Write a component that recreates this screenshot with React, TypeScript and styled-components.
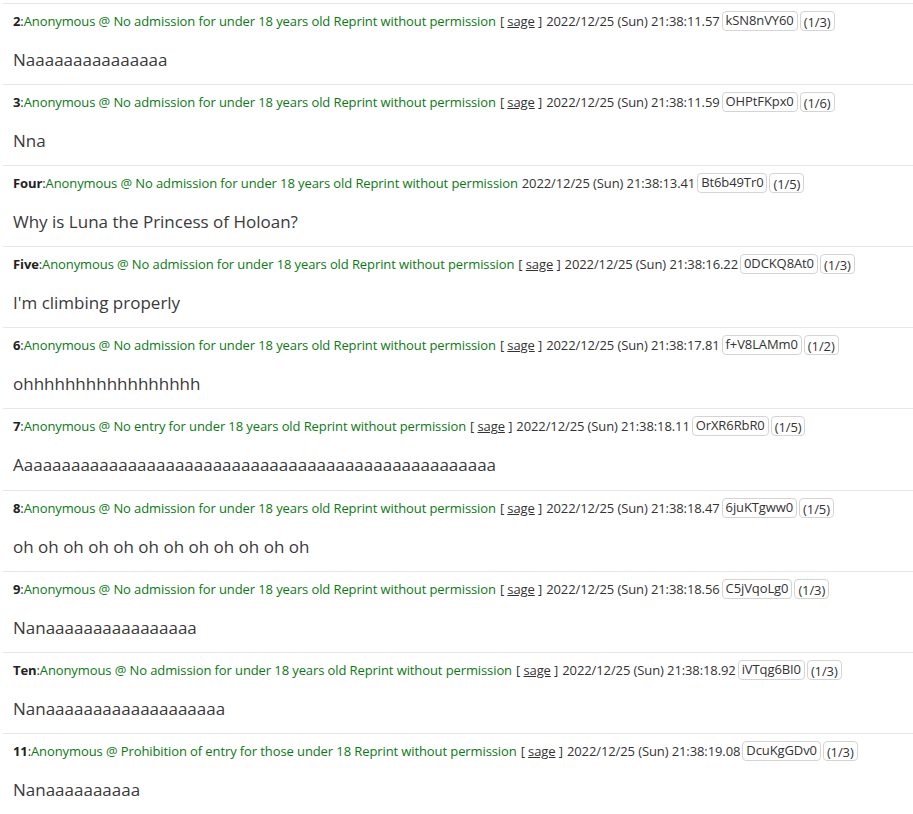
import React from 'react'
import styled, { createGlobalStyle } from 'styled-components'

const GlobalStyle = createGlobalStyle`
  html, body {
    margin: 0;
    padding: 0;
    background: #fff;
  }
  body {
    font-family: 'Open Sans', 'Noto Sans', sans-serif;
    color: #333;
  }
`

const List = styled.div`
  display: flex;
  flex-direction: column;
  margin-left: 3px;
  padding-top: 2.5px;
`

const Post = styled.div`
  display: flex;
  flex-direction: column;
  height: 81.2px;
  box-sizing: border-box;
  border-top: 1px solid #e6e6ec;
  padding: 7px 10px 0 10px;
`

const Header = styled.div`
  display: flex;
  align-items: center;
  font-size: 13px;
  letter-spacing: -0.1px;
  line-height: 18px;
  white-space: nowrap;
  color: #333;
`

const Num = styled.b`
  font-weight: 700;
  color: #222;
`

const Name = styled.span`
  color: #0a7a12;
  margin-right: 4px;
`

const Sage = styled.span`
  margin-right: 4px;
  a {
    color: #333;
    text-decoration: underline;
  }
`

const Badge = styled.span<{ $low?: boolean }>`
  display: inline-block;
  border: 1px solid #d4d4d4;
  border-radius: 4px;
  padding: ${(p) => (p.$low ? '2px 3px 0' : '0 3px 2px')};
  line-height: 16px;
  margin-left: 2px;
  color: #333;
`

const Body = styled.div`
  font-size: 17px;
  line-height: 24px;
  margin-top: 17px;
  color: #3a3a3a;
`

type Item = {
  no: string
  rule: string
  sage: boolean
  time: string
  id: string
  count: string
  text: string
}

const adm = 'No admission for under 18 years old Reprint without permission'

const posts: Item[] = [
  { no: '2', rule: adm, sage: true, time: '21:38:11.57', id: 'kSN8nVY60', count: '(1/3)', text: 'Naaaaaaaaaaaaaaa' },
  { no: '3', rule: adm, sage: true, time: '21:38:11.59', id: 'OHPtFKpx0', count: '(1/6)', text: 'Nna' },
  { no: 'Four', rule: adm, sage: false, time: '21:38:13.41', id: 'Bt6b49Tr0', count: '(1/5)', text: 'Why is Luna the Princess of Holoan?' },
  { no: 'Five', rule: adm, sage: true, time: '21:38:16.22', id: '0DCKQ8At0', count: '(1/3)', text: "I'm climbing properly" },
  { no: '6', rule: adm, sage: true, time: '21:38:17.81', id: 'f+V8LAMm0', count: '(1/2)', text: 'ohhhhhhhhhhhhhhhhh' },
  { no: '7', rule: 'No entry for under 18 years old Reprint without permission', sage: true, time: '21:38:18.11', id: 'OrXR6RbR0', count: '(1/5)', text: 'Aaaaaaaaaaaaaaaaaaaaaaaaaaaaaaaaaaaaaaaaaaaaaaaaaaa' },
  { no: '8', rule: adm, sage: true, time: '21:38:18.47', id: '6juKTgww0', count: '(1/5)', text: 'oh oh oh oh oh oh oh oh oh oh oh oh' },
  { no: '9', rule: adm, sage: true, time: '21:38:18.56', id: 'C5jVqoLg0', count: '(1/3)', text: 'Nanaaaaaaaaaaaaaaaa' },
  { no: 'Ten', rule: adm, sage: true, time: '21:38:18.92', id: 'iVTqg6BI0', count: '(1/3)', text: 'Nanaaaaaaaaaaaaaaaaaaa' },
  { no: '11', rule: 'Prohibition of entry for those under 18 Reprint without permission', sage: true, time: '21:38:19.08', id: 'DcuKgGDv0', count: '(1/3)', text: 'Nanaaaaaaaaaa' },
]

export default function App() {
  return (
    <>
      <GlobalStyle />
      <List>
        {posts.map((p) => (
          <Post key={p.no}>
            <Header>
              <Num>{p.no}</Num>:
              <Name>Anonymous @ {p.rule}</Name>
              {p.sage && (
                <Sage>
                  [ <a href='#'>sage</a> ]
                </Sage>
              )}
              <span>2022/12/25 (Sun) {p.time}</span>
              <Badge>{p.id}</Badge>
              <Badge $low>{p.count}</Badge>
            </Header>
            <Body>{p.text}</Body>
          </Post>
        ))}
      </List>
    </>
  )
}
